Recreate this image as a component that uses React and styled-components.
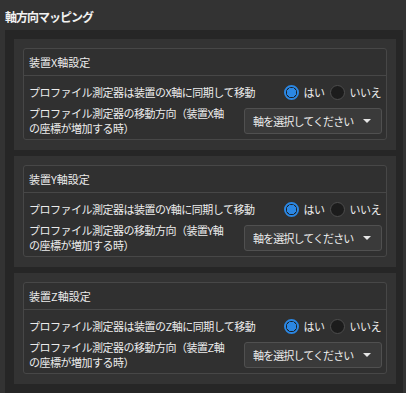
import styled, { createGlobalStyle } from "styled-components";

const Global = createGlobalStyle`
  html, body {
    margin: 0;
    padding: 0;
    background: #333333;
    font-family: "Noto Sans CJK JP", "Noto Sans", sans-serif;
    color: #e6e6e6;
  }
`;

const axes = ["X", "Y", "Z"];

export default function App() {
  return (
    <>
      <Global />
      <Title>軸方向マッピング</Title>
      <Outer>
        {axes.map((axis) => (
          <Section key={axis}>
            <Group>
              <GroupHeader>装置{axis}軸設定</GroupHeader>
              <GroupBody>
                <Row>
                  <Label>プロファイル測定器は装置の{axis}軸に同期して移動</Label>
                  <Radios>
                    <Radio checked />
                    <RadioText>はい</RadioText>
                    <Radio />
                    <RadioText>いいえ</RadioText>
                  </Radios>
                </Row>
                <Row tall>
                  <Label>
                    プロファイル測定器の移動方向（装置{axis}軸
                    <br />
                    の座標が増加する時）
                  </Label>
                  <Select>
                    <span>軸を選択してください</span>
                    <Caret />
                  </Select>
                </Row>
              </GroupBody>
            </Group>
          </Section>
        ))}
      </Outer>
    </>
  );
}

const Title = styled.div`
  height: 30px;
  padding-left: 5px;
  display: flex;
  align-items: center;
  padding-top: 2px;
  box-sizing: border-box;
  font-size: 12px;
  font-weight: bold;
  letter-spacing: -1px;
  color: #f2f2f2;
`;

const Outer = styled.div`
  margin: 0 3px 0 5px;
  background: #262626;
  padding: 9px 7px 13px 9px;
  display: flex;
  flex-direction: column;
  gap: 6px;
`;

const Section = styled.div`
  background: #333333;
  padding: 9px 9px 10px 9px;
`;

const Group = styled.div`
  border: 1px solid #474747;
  border-radius: 3px;
  background: #303030;
`;

const GroupHeader = styled.div`
  height: 26px;
  display: flex;
  align-items: center;
  padding-left: 5px;
  font-size: 11px;
  color: #ececec;
  border-bottom: 1px solid #474747;
`;

const GroupBody = styled.div`
  padding: 6px 4px 4px 5px;
  display: flex;
  flex-direction: column;
  gap: 5px;
`;

const Row = styled.div`
  display: flex;
  align-items: center;
  justify-content: space-between;
  height: ${(props) => (props.tall ? "28px" : "20px")};
`;

const Label = styled.div`
  font-size: 11px;
  line-height: 15px;
  letter-spacing: -0.5px;
  white-space: nowrap;
  color: #ececec;
`;

const Radios = styled.div`
  display: flex;
  align-items: center;
  padding-right: 1px;
`;

const Radio = styled.span`
  width: 15px;
  height: 15px;
  box-sizing: border-box;
  border-radius: 50%;
  margin-left: 5px;
  border: ${(props) => (props.checked ? "2px solid #2b87e3" : "1px solid #4d4d4d")};
  background: ${(props) =>
    props.checked
      ? "radial-gradient(circle, #2b87e3 0 4.5px, #1c1c1c 5px)"
      : "#1c1c1c"};
`;

const RadioText = styled.span`
  font-size: 11px;
  margin-left: 5px;
  letter-spacing: -0.5px;
  color: #ececec;
`;

const Select = styled.div`
  width: 138px;
  height: 26px;
  box-sizing: border-box;
  border: 1px solid #505050;
  border-radius: 3px;
  background: #3a3a3a;
  display: flex;
  align-items: center;
  justify-content: space-between;
  padding: 0 10px 0 8px;
  font-size: 11px;
  letter-spacing: -0.9px;
  color: #ececec;
`;

const Caret = styled.span`
  width: 0;
  height: 0;
  border-left: 4px solid transparent;
  border-right: 4px solid transparent;
  border-top: 4px solid #e6e6e6;
`;
